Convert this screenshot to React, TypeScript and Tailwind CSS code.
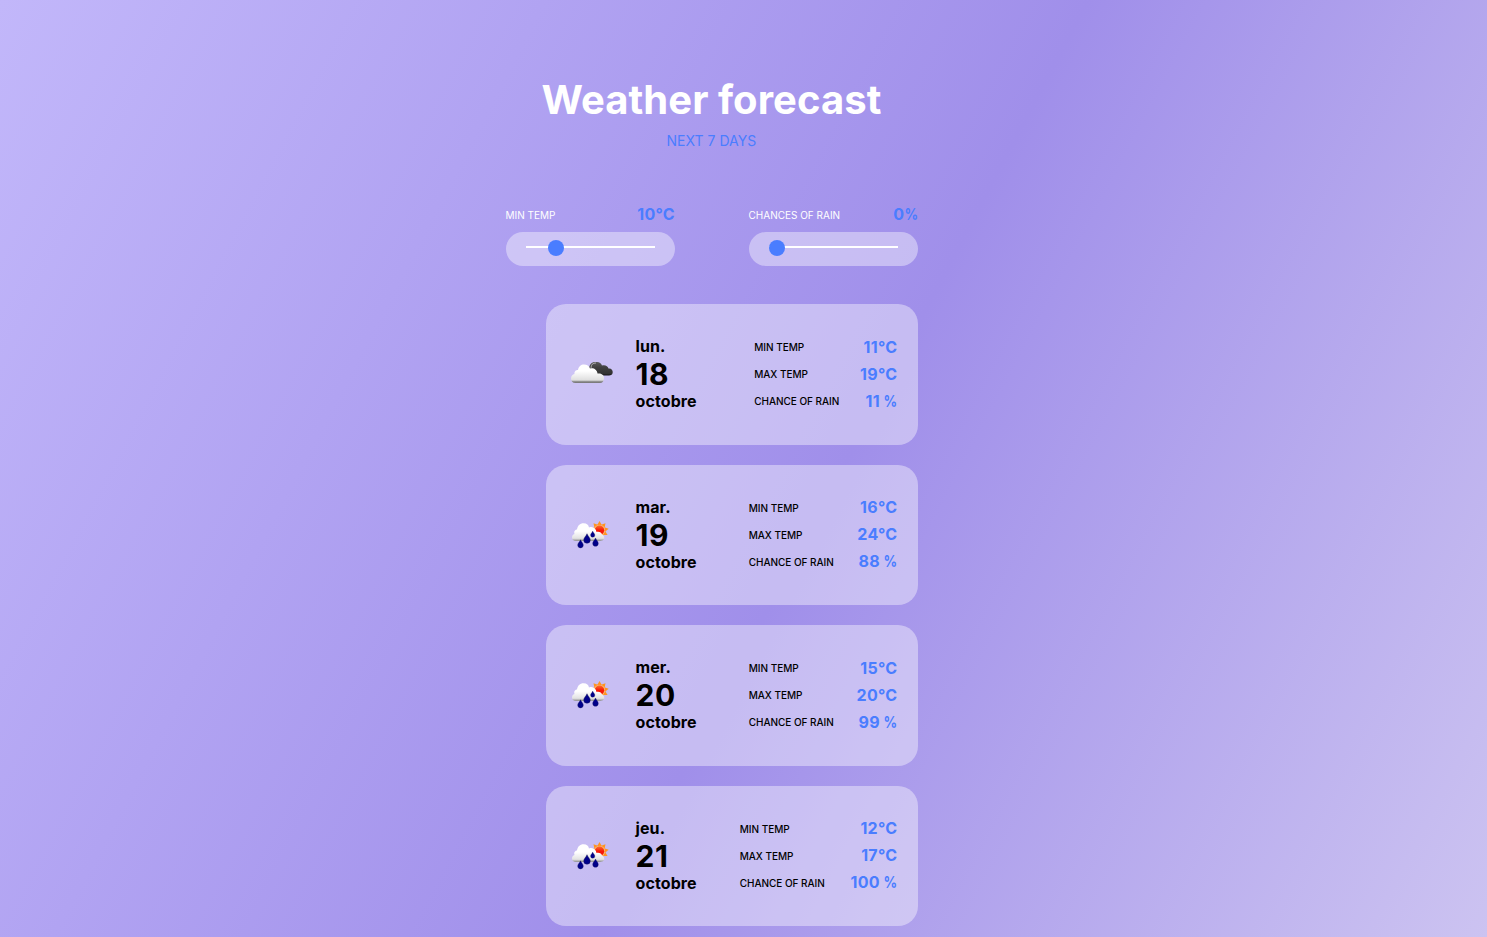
type Day = { weekday: string; date: number; min: number; max: number; rain: number; rainy: boolean; statsWidth: string };

const days: Day[] = [
  { weekday: "lun.", date: 18, min: 11, max: 19, rain: 11, rainy: false, statsWidth: "w-[143px]" },
  { weekday: "mar.", date: 19, min: 16, max: 24, rain: 88, rainy: true, statsWidth: "w-[148.5px]" },
  { weekday: "mer.", date: 20, min: 15, max: 20, rain: 99, rainy: true, statsWidth: "w-[148.5px]" },
  { weekday: "jeu.", date: 21, min: 12, max: 17, rain: 100, rainy: true, statsWidth: "w-[157.5px]" },
];

const Gradients = () => (
  <svg width="0" height="0" className="absolute">
    <defs>
      <linearGradient id="cloud" x1="0" y1="0" x2="0" y2="1">
        <stop offset="0.35" stopColor="#ffffff" />
        <stop offset="0.85" stopColor="#dedede" />
        <stop offset="0.9" stopColor="#9a9a9a" />
        <stop offset="1" stopColor="#707070" />
      </linearGradient>
      <linearGradient id="rain-cloud" x1="0" y1="0" x2="0" y2="1">
        <stop offset="0.45" stopColor="#ffffff" />
        <stop offset="0.85" stopColor="#e2e2e2" />
        <stop offset="1" stopColor="#8c8c8c" />
      </linearGradient>
      <linearGradient id="dark" x1="0" y1="0" x2="0" y2="1">
        <stop offset="0" stopColor="#5c5c5c" />
        <stop offset="0.4" stopColor="#404040" />
        <stop offset="0.85" stopColor="#333333" />
        <stop offset="1" stopColor="#151515" />
      </linearGradient>
      <linearGradient id="sun" x1="0" y1="0" x2="0" y2="1">
        <stop offset="0" stopColor="#ff6a2a" />
        <stop offset="0.5" stopColor="#f51808" />
      </linearGradient>
    </defs>
  </svg>
);

const Clouds = () => (
  <svg width="50" height="50" viewBox="0 0 50 50">
    <path d="M22 21C22 15 25 12.5 29 13C32 12.5 34 14 35 16.500C38 15.500 41 17 41.500 19.500C44 19 46 21 45.700 23.500C45.500 25.800 44 26.500 42 26.500H26Z" fill="url(#dark)" />
    <path d="M24 19C24 15.500 26 13.800 29 14" fill="none" stroke="#c4c4c4" strokeWidth="0.8" />
    <path d="M8.500 34C5.500 34 4 32 4 29.500C4 27 5.500 25.500 7.500 25C7 22.500 9 21 11 21C11.500 17.500 14 15.500 17 15.500C20 15.500 22 17 23 19.500C26.500 18.500 30 20.500 30.500 24.500C34 24 37 25.500 37 29C37 32 35.500 34 33 34Z" fill="url(#cloud)" />
  </svg>
);

const drop = "M0 -5C1 -2.500 3.300 -0.800 3.300 1.300A3.300 3.300 0 0 1 -3.300 1.300C-3.300 -0.800 -1 -2.500 0 -5Z";
const rays = [0, 40, 80, 120, 160, 200, 240, 280, 320];

const RainSun = () => (
  <svg width="50" height="50" viewBox="0 0 50 50">
    <g transform="translate(32.500 20.300)">
      {rays.map((angle) => (
        <path key={angle} d="M-2.300 -5.200L0 -9.300L2.300 -5.200Z" fill="#ff9420" transform={`rotate(${angle})`} />
      ))}
      <circle r="5.600" fill="#ffb060" />
      <circle r="4.700" fill="url(#sun)" />
    </g>
    <path d="M9 31C6.500 31 5 29.500 5 27.500C5 25.500 6 24.500 7.500 24C6.500 21 8.500 19.500 10 19.500C10.500 15.500 13 13.200 16.500 13.200C20 13.200 21.500 15 22 17.500C26 16 29 18.500 29.500 22C32.500 21.500 34.500 22.500 35 24.500C38 25.500 38 30 35 30.500C34 31 33 31 31 31Z" fill="url(#rain-cloud)" />
    <g fill="#00008a" stroke="#1c1c55" strokeWidth="0.4">
      <path d={drop} transform="translate(20 28.700)" />
      <path d={drop} transform="translate(25.700 24.300) scale(.65)" />
      <path d={drop} transform="translate(13.500 34) scale(.85)" />
      <path d={drop} transform="translate(28.500 32.300) scale(.85)" />
    </g>
  </svg>
);

function Slider({ label, value, unit, offset }: { label: string; value: string; unit: string; offset: string }) {
  return (
    <div className="w-[169px]">
      <div className="flex h-[26px] items-center justify-between text-white">
        <span className="-ml-[0.5px] pt-[2px] text-[10px] leading-none">{label}</span>
        <Reading value={value} unit={unit} />
      </div>
      <div className="mt-[5px] flex h-[34px] items-center rounded-[20px] bg-white/40 px-5">
        <div className="-mt-[4px] flex h-[2px] w-full items-center bg-white">
          <div className={"mt-[2px] size-4 shrink-0 rounded-full bg-[#4a7dff] " + offset} />
        </div>
      </div>
    </div>
  );
}

function Reading({ value, unit }: { value: string; unit: string }) {
  const isPercent = unit.includes("%");
  return (
    <span className="whitespace-pre pb-[1px] text-base font-bold leading-none tracking-[0.3px] text-[#4a7dff]">
      {value}
      <span className={isPercent ? "-ml-[2.500px] inline-block origin-right scale-x-[.84] tracking-normal" : ""}>{unit}</span>
    </span>
  );
}

function Stat({ label, value, unit }: { label: string; value: string; unit: string }) {
  return (
    <div className="flex h-[27px] items-center justify-between whitespace-nowrap">
      <span className="-ml-[0.300px] pt-[0.5px] text-[10px] font-medium tracking-[-0.030px]">{label}</span>
      <Reading value={value} unit={unit} />
    </div>
  );
}

function Card({ day }: { day: Day }) {
  return (
    <article className="flex h-[140.5px] items-center rounded-[20px] bg-white/40 pl-[20.750px] pr-[20.500px]">
      <div className="w-[68.750px]">{day.rainy ? <RainSun /> : <Clouds />}</div>
      <div className="text-base font-bold leading-[19px] tracking-[0.1px]">
        <p>{day.weekday}</p>
        <p className="text-[30px] leading-[36px] tracking-[0.600px]">{day.date}</p>
        <p>octobre</p>
      </div>
      <div className={"ml-auto " + day.statsWidth}>
        <Stat label="MIN TEMP" value={`${day.min}`} unit="°C" />
        <Stat label="MAX TEMP" value={`${day.max}`} unit="°C" />
        <Stat label="CHANCE OF RAIN" value={`${day.rain}`} unit=" %" />
      </div>
    </article>
  );
}

export default function App() {
  return (
    <main className="h-[937px] overflow-hidden bg-[linear-gradient(117.700deg,#c2b7fa_0%,#a08fea_55%,#ccc3f1_100%)] pt-[76px] font-[Inter,sans-serif]">
      <Gradients />
      <div className="ml-[506px] w-[412px]">
        <header className="-ml-[1.250px] text-center text-white">
          <h1 className="text-[40px] font-bold leading-[48px] tracking-[0.05px]">Weather forecast</h1>
          <p className="mt-2 text-sm leading-[17px] tracking-[0.04px] text-[#4a7dff]">NEXT 7 DAYS</p>
        </header>
        <div className="mt-[52px] flex justify-between">
          <Slider label="MIN TEMP" value="10" unit="°C" offset="ml-[22px]" />
          <Slider label="CHANCES OF RAIN" value="0" unit="%" offset="ml-0" />
        </div>
        <section className="ml-10 mt-[38px] flex flex-col gap-5">
          {days.map((day) => (
            <Card key={day.date} day={day} />
          ))}
        </section>
      </div>
    </main>
  );
}
